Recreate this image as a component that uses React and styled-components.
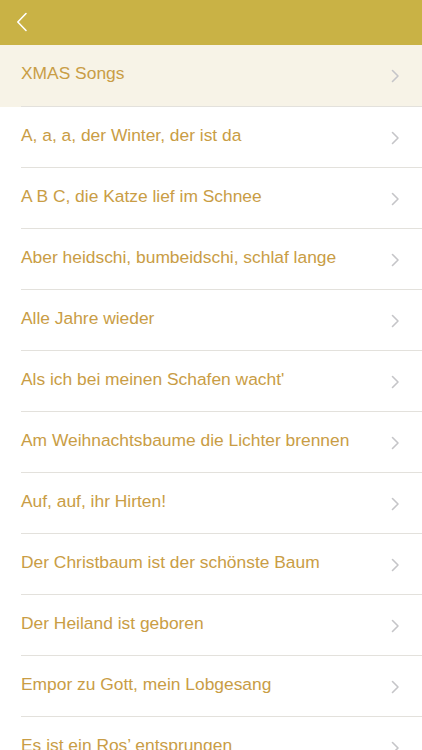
import React from 'react';
import styled, { createGlobalStyle } from 'styled-components';

const GlobalStyle = createGlobalStyle`
  body {
    margin: 0;
    background: #ffffff;
    font-family: "Liberation Sans", Arial, sans-serif;
  }
`

const Page = styled.div`
  width: 422px;
  height: 750px;
  overflow: hidden;
  display: flex;
  flex-direction: column;
`

const NavBar = styled.header`
  height: 45px;
  flex-shrink: 0;
  background: #c9b245;
  display: flex;
  align-items: center;
  padding-left: 16px;
`

const BackButton = styled.button`
  border: none;
  background: none;
  padding: 0;
  display: flex;
  margin-top: -1px;
`

const List = styled.ul`
  list-style: none;
  margin: 0;
  padding: 0;
`

const Row = styled.li`
  height: ${p => (p.$active ? '62px' : '61px')};
  display: flex;
  align-items: center;
  padding-left: 21px;
  background: ${p => (p.$active ? '#f7f3e7' : '#ffffff')};
`

const RowInner = styled.div`
  flex: 1;
  height: 100%;
  display: flex;
  align-items: center;
  justify-content: space-between;
  padding-right: 22px;
  box-sizing: border-box;
  border-bottom: 1px solid #e3e1dc;
`

const Title = styled.span`
  color: #c99d45;
  font-size: 17.4px;
  margin-top: -4px;
`

const ChevronBox = styled.span`
  display: flex;
  margin-top: 1px;
`

const Chevron = () => (
  <ChevronBox>
    <svg width="9" height="14" viewBox="0 0 9 14">
      <path d="M1.5 1.5 L7 7 L1.5 12.5" fill="none" stroke="#c5c5c8" strokeWidth="1.6" strokeLinecap="round" strokeLinejoin="round" />
    </svg>
  </ChevronBox>
)

const songs = [
  'XMAS Songs',
  'A, a, a, der Winter, der ist da',
  'A B C, die Katze lief im Schnee',
  'Aber heidschi, bumbeidschi, schlaf lange',
  'Alle Jahre wieder',
  "Als ich bei meinen Schafen wacht'",
  'Am Weihnachtsbaume die Lichter brennen',
  'Auf, auf, ihr Hirten!',
  'Der Christbaum ist der schönste Baum',
  'Der Heiland ist geboren',
  'Empor zu Gott, mein Lobgesang',
  'Es ist ein Ros’ entsprungen',
]

export default function App() {
  return (
    <>
      <GlobalStyle />
      <Page>
        <NavBar>
          <BackButton type="button" aria-label="Back">
            <svg width="12" height="20" viewBox="0 0 12 20">
              <path d="M10 1.5 L1.8 10 L10 18.5" fill="none" stroke="#ffffff" strokeWidth="1.6" strokeLinecap="round" strokeLinejoin="round" />
            </svg>
          </BackButton>
        </NavBar>
        <List>
          {songs.map((song, i) => (
            <Row key={song} $active={i === 0}>
              <RowInner>
                <Title>{song}</Title>
                <Chevron />
              </RowInner>
            </Row>
          ))}
        </List>
      </Page>
    </>
  )
}
